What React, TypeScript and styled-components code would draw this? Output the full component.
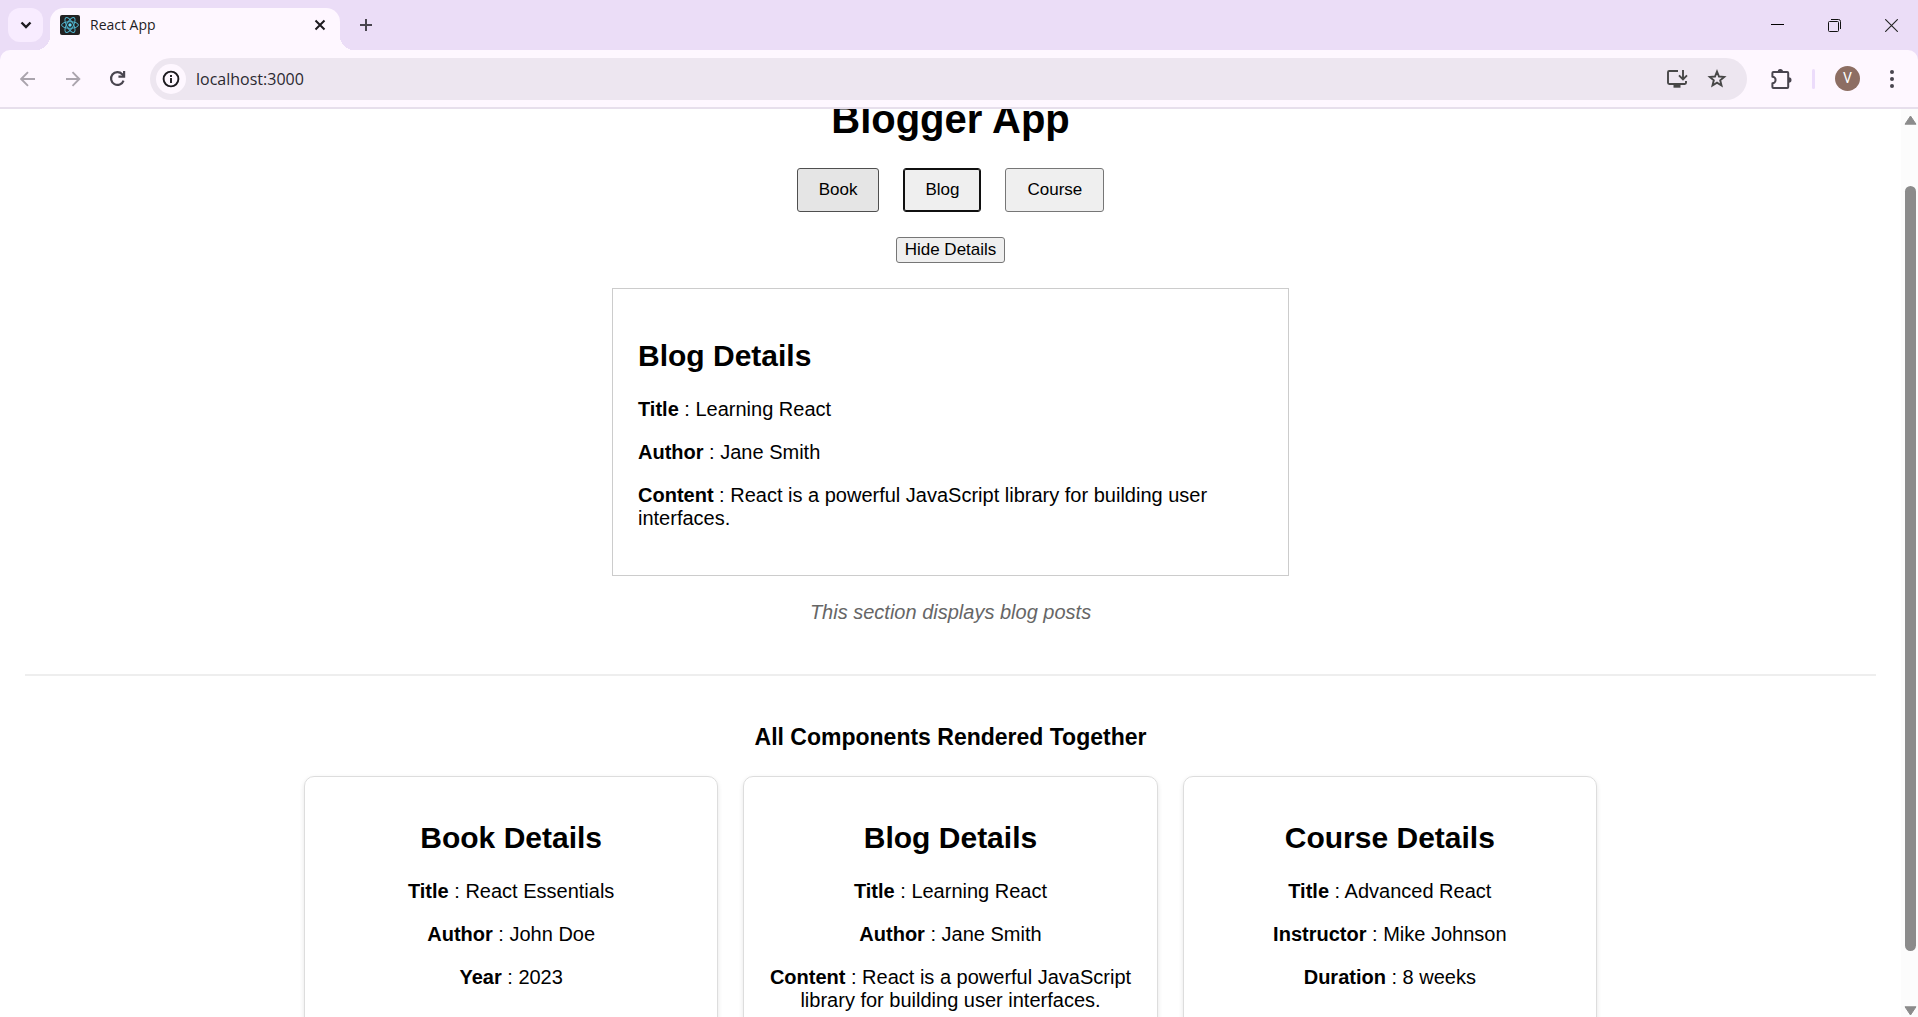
import React, { useLayoutEffect, useRef, useState } from "react";
import styled, { createGlobalStyle } from "styled-components";

const GlobalStyle = createGlobalStyle`
  *, *::before, *::after { box-sizing: border-box; }
  body {
    margin: 0;
    overflow: hidden;
    background: #fff;
    color: #000;
    font-family: "Liberation Sans", Arial, sans-serif;
  }
  button, input { font: inherit; color: inherit; }
`;

const uiFont = `"Open Sans", "Segoe UI", sans-serif`;

/* ---------- Browser frame ---------- */

const Window = styled.div`
  display: flex;
  flex-direction: column;
  height: 100vh;
  overflow: hidden;
`;

const TabStrip = styled.header`
  display: flex;
  align-items: center;
  flex: none;
  height: 50px;
  padding: 0 20px 0 8px;
  background: #ebddf7;
  font-family: ${uiFont};
`;

const IconButton = styled.button<{ $width?: number; $tone?: string }>`
  display: flex;
  align-items: center;
  justify-content: center;
  flex: none;
  width: ${(p) => p.$width ?? 44}px;
  height: 34px;
  padding: 0;
  border: 0;
  background: transparent;
  color: ${(p) => p.$tone ?? "#49454f"};
`;

const TabSearch = styled(IconButton)`
  border-radius: 12px;
  background: #f8ecff;
`;

const Tab = styled.div`
  position: relative;
  display: flex;
  align-items: center;
  align-self: flex-end;
  width: 290px;
  height: 42px;
  margin-left: 7px;
  padding: 0 4px 8px 10px;
  border-radius: 14px 14px 0 0;
  background: #fef7ff;

  &::before,
  &::after {
    content: "";
    position: absolute;
    bottom: 0;
    width: 14px;
    height: 14px;
  }
  &::before {
    right: 100%;
    background: radial-gradient(circle at 0 0, transparent 14px, #fef7ff 14px);
  }
  &::after {
    left: 100%;
    background: radial-gradient(circle at 100% 0, transparent 14px, #fef7ff 14px);
  }
`;

const TabTitle = styled.span`
  flex: 1;
  margin-left: 10px;
  font-size: 14px;
  line-height: 20px;
  color: #1f1d24;
`;

const NewTab = styled(IconButton)`
  margin-left: 8px;
`;

const WindowControls = styled.div`
  display: flex;
  gap: 44px;
  margin-left: auto;
`;

const ToolbarBack = styled.div`
  flex: none;
  background: #ebddf7;
`;

const Toolbar = styled.div`
  display: flex;
  align-items: center;
  height: 59px;
  padding: 0 4px 0 5px;
  border-bottom: 2px solid #e7dfec;
  border-radius: 10px 10px 0 0;
  background: #fef7ff;
`;

const AddressBar = styled.div`
  display: flex;
  align-items: center;
  flex: 1;
  height: 42px;
  margin: 0 12px 0 10px;
  padding: 0 10px 0 6px;
  border-radius: 21px;
  background: #ede6f0;
`;

const SiteInfo = styled(IconButton)`
  height: 30px;
  border-radius: 50%;
  background: #fef7ff;
`;

const AddressInput = styled.input`
  flex: 1;
  min-width: 0;
  margin-left: 10px;
  padding: 0;
  border: 0;
  outline: 0;
  background: transparent;
  font-family: ${uiFont};
  font-size: 16px;
  line-height: 24px;
  color: #2b2930;
`;

const Divider = styled.span`
  flex: none;
  width: 3px;
  height: 20px;
  margin: 0 20px 0 9px;
  border-radius: 2px;
  background: #ecdcfb;
`;

const Avatar = styled.button`
  flex: none;
  width: 25px;
  height: 25px;
  margin-right: 10px;
  padding: 0;
  border: 0;
  border-radius: 50%;
  background: #8d6e63;
  color: #fff;
  font-family: Roboto, sans-serif;
  font-size: 14px;
  line-height: 25px;
  text-align: center;
`;

const Viewport = styled.div`
  display: flex;
  flex: 1;
  min-height: 0;
`;

const Scroller = styled.div`
  flex: 1;
  min-width: 0;
  overflow: hidden;
`;

const Scrollbar = styled.div`
  display: flex;
  flex-direction: column;
  align-items: center;
  flex: none;
  width: 17px;
  padding: 6px 0 1px 2px;
  background: #fcfcfc;
`;

const TrackSpace = styled.div<{ $share: number }>`
  flex: ${(p) => p.$share};
`;

const Thumb = styled(TrackSpace)`
  width: 11px;
  border-radius: 6px;
  background: #8b8b8b;
`;

/* ---------- Page ---------- */

const Page = styled.main`
  padding: 25px;
  text-align: center;
`;

const PageTitle = styled.h1`
  margin: 27px 0 26px;
  font-size: 40px;
  line-height: 46px;
`;

const Choices = styled.div`
  display: flex;
  justify-content: center;
  gap: 24px;
`;

const ChoiceButton = styled.button<{ $state?: "hovered" | "focused" }>`
  height: 44px;
  padding: 0 21px;
  border: 1px solid ${(p) => (p.$state === "hovered" ? "#4f4f4f" : "#767676")};
  border-radius: 3px;
  background: ${(p) => (p.$state === "hovered" ? "#e5e5e5" : "#efefef")};
  font-size: 17px;
  line-height: 20px;
  ${(p) =>
    p.$state === "focused" &&
    `border-color: #101010; box-shadow: inset 0 0 0 1px #101010;`}
`;

const ToggleButton = styled.button`
  display: block;
  height: 26px;
  margin: 25px auto;
  padding: 0 8px;
  border: 1px solid #767676;
  border-radius: 3px;
  background: #efefef;
  font-size: 17px;
  line-height: 20px;
`;

const DetailBox = styled.section`
  width: 677px;
  max-width: 100%;
  margin: 0 auto 25px;
  padding: 25px;
  border: 1px solid #ccc;
  text-align: left;
`;

const DetailTitle = styled.h2`
  margin: 25px 0;
  font-size: 30px;
  line-height: 34px;
`;

const Field = styled.p`
  margin: 20px 0;
  font-size: 20px;
  line-height: 23px;
`;

const Note = styled.p`
  margin: 0;
  font-size: 20px;
  line-height: 23px;
  font-style: italic;
  color: #666;
`;

const Rule = styled.hr`
  height: 2px;
  margin: 50px 0 47px;
  border: 0;
  background: #eee;
`;

const GroupTitle = styled.h3`
  margin: 0 0 25px;
  font-size: 23px;
  line-height: 28px;
`;

const CardGrid = styled.div`
  display: grid;
  grid-template-columns: repeat(3, 1fr);
  gap: 25px;
  width: 100%;
  max-width: 1293px;
  margin: 0 auto 25px;
`;

const Card = styled.article`
  padding: 19px;
  border: 1px solid #ddd;
  border-radius: 10px;
  box-shadow: 0 2px 5px rgba(0, 0, 0, 0.1);
`;

/* ---------- Icons ---------- */

const ReactIcon = () => (
  <svg width="20" height="20" viewBox="0 0 20 20" aria-hidden="true">
    <rect width="20" height="20" rx="2" fill="#222" />
    <g fill="none" stroke="#4fb3cc" strokeWidth="1">
      <ellipse cx="10" cy="10" rx="8.4" ry="3.3" />
      <ellipse cx="10" cy="10" rx="8.4" ry="3.3" transform="rotate(60 10 10)" />
      <ellipse cx="10" cy="10" rx="8.4" ry="3.3" transform="rotate(120 10 10)" />
    </g>
    <circle cx="10" cy="10" r="1.7" fill="#61dafb" />
  </svg>
);

const ChevronIcon = () => (
  <svg width="12" height="12" viewBox="0 0 12 12" fill="none" stroke="currentColor" strokeWidth="2.4" aria-hidden="true">
    <path d="M1.5 3.5 6 8l4.5-4.5" />
  </svg>
);

const CloseTabIcon = () => (
  <svg width="12" height="12" viewBox="0 0 12 12" fill="none" stroke="currentColor" strokeWidth="2" aria-hidden="true">
    <path d="m1.5 1.5 9 9m0-9-9 9" />
  </svg>
);

const PlusIcon = () => (
  <svg width="14" height="14" viewBox="0 0 14 14" fill="none" stroke="currentColor" strokeWidth="2" aria-hidden="true">
    <path d="M7 1v12M1 7h12" />
  </svg>
);

const ArrowIcon = ({ forward = false }: { forward?: boolean }) => (
  <svg width="16" height="16" viewBox="0 0 16 16" fill="none" stroke="currentColor" strokeWidth="1.9" aria-hidden="true">
    <path d={forward ? "M1 8h13M7.5 1.2 14.3 8 7.5 14.8" : "M15 8H2M8 1.2 1.2 8 8 14.8"} />
  </svg>
);

const ReloadIcon = () => (
  <svg width="17" height="17" viewBox="0 0 18 18" fill="none" stroke="currentColor" strokeWidth="2.3" aria-hidden="true">
    <path d="M15.400 11.200A6.800 6.800 0 1 1 14 4.400L16 6.600" />
    <path d="M16 1v6h-6" />
  </svg>
);

const InfoIcon = () => (
  <svg width="18" height="18" viewBox="0 0 18 18" fill="none" stroke="currentColor" strokeWidth="1.9" aria-hidden="true">
    <circle cx="9" cy="9" r="7.4" />
    <path d="M9 8v5M9 5v2" />
  </svg>
);

const InstallIcon = () => (
  <svg width="22" height="20" viewBox="0 0 22 20" fill="none" stroke="currentColor" strokeWidth="1.9" aria-hidden="true">
    <path d="M12 2H3.2Q2 2 2 3.2v10.6Q2 15 3.2 15h15.6q1.2 0 1.2-1.2V12" />
    <path d="M17 1v8.500M13 6.300l4 4 4-4" />
    <path d="M7.5 17h7" strokeWidth="3.4" />
  </svg>
);

const StarIcon = () => (
  <svg width="20" height="20" viewBox="0 0 20 20" fill="none" stroke="currentColor" strokeWidth="1.9" aria-hidden="true">
    <path d="m10 2.600 2 4.900 5.200.4-4 3.400 1.300 5.200-4.500-2.800-4.500 2.800 1.300-5.200-4-3.400 5.200-.4z" />
  </svg>
);

const PuzzleIcon = () => (
  <svg width="22" height="22" viewBox="0 0 22 22" aria-hidden="true">
    <path
      d="M3.400 4h13.800q1 0 1 1v14q0 1-1 1H3.400q-1 0-1-1v-3.800a3.100 3.100 0 0 0 0-6.400V5q0-1 1-1z"
      fill="none"
      stroke="currentColor"
      strokeWidth="2"
      strokeLinejoin="round"
    />
    <path d="M7.600 3.600a2.700 2.700 0 0 1 5.400 0zM18.800 9.300a2.700 2.700 0 0 1 0 5.400z" fill="currentColor" />
  </svg>
);

const DotsIcon = () => (
  <svg width="6" height="20" viewBox="0 0 6 20" fill="currentColor" aria-hidden="true">
    <circle cx="3" cy="3" r="2" />
    <circle cx="3" cy="10" r="2" />
    <circle cx="3" cy="17" r="2" />
  </svg>
);

const MinimizeIcon = () => (
  <svg width="13" height="13" viewBox="0 0 13 13" stroke="#000" aria-hidden="true">
    <path d="M0 5.500h13" />
  </svg>
);

const RestoreIcon = () => (
  <svg width="13" height="13" viewBox="0 0 13 13" fill="none" stroke="#111" strokeWidth="1" aria-hidden="true">
    <rect x="0.500" y="2.500" width="10" height="10" rx="1" />
    <path d="M3 .5h7.500a2 2 0 0 1 2 2V10" />
  </svg>
);

const CloseWindowIcon = () => (
  <svg width="13" height="13" viewBox="0 0 13 13" stroke="#222" strokeWidth="1.100" aria-hidden="true">
    <path d="m.2.2 12.600 12.600m0-12.600L.2 12.800" />
  </svg>
);

const ScrollArrow = ({ down = false }: { down?: boolean }) => (
  <svg width="13" height="10" viewBox="0 0 13 10" fill="#8b8b8b" stroke="#8b8b8b" strokeLinejoin="round" aria-hidden="true">
    <path d={down ? "M1 .8h11L6.500 9z" : "M1 9.200h11L6.500 1z"} />
  </svg>
);

/* ---------- Content ---------- */

type Details = { heading: string; fields: [string, string][] };

const book: Details = {
  heading: "Book Details",
  fields: [["Title", "React Essentials"], ["Author", "John Doe"], ["Year", "2023"]],
};
const blog: Details = {
  heading: "Blog Details",
  fields: [
    ["Title", "Learning React"],
    ["Author", "Jane Smith"],
    ["Content", "React is a powerful JavaScript library for building user interfaces."],
  ],
};
const course: Details = {
  heading: "Course Details",
  fields: [["Title", "Advanced React"], ["Instructor", "Mike Johnson"], ["Duration", "8 weeks"]],
};

const DetailContent = ({ heading, fields }: Details) => (
  <>
    <DetailTitle>{heading}</DetailTitle>
    {fields.map(([label, value]) => (
      <Field key={label}>
        <strong>{label}</strong> : {value}
      </Field>
    ))}
  </>
);

export default function App() {
  const [address, setAddress] = useState("localhost:3000");
  const scroller = useRef<HTMLDivElement>(null);

  useLayoutEffect(() => {
    if (scroller.current) scroller.current.scrollTop = 65;
  }, []);

  return (
    <Window>
      <GlobalStyle />
      <TabStrip>
        <TabSearch $width={35} $tone="#1d1b20" aria-label="Search tabs"><ChevronIcon /></TabSearch>
        <Tab>
          <ReactIcon />
          <TabTitle>React App</TabTitle>
          <IconButton $width={32} $tone="#1d1b20" aria-label="Close tab"><CloseTabIcon /></IconButton>
        </Tab>
        <NewTab $width={36} aria-label="New tab"><PlusIcon /></NewTab>
        <WindowControls>
          <IconButton $width={13} aria-label="Minimize"><MinimizeIcon /></IconButton>
          <IconButton $width={13} aria-label="Restore"><RestoreIcon /></IconButton>
          <IconButton $width={13} aria-label="Close"><CloseWindowIcon /></IconButton>
        </WindowControls>
      </TabStrip>
      <ToolbarBack>
        <Toolbar>
          <IconButton $width={45} $tone="#aaa4ad" aria-label="Back"><ArrowIcon /></IconButton>
          <IconButton $width={45} $tone="#aaa4ad" aria-label="Forward"><ArrowIcon forward /></IconButton>
          <IconButton $width={45} aria-label="Reload"><ReloadIcon /></IconButton>
          <AddressBar>
            <SiteInfo $width={30} $tone="#1d1b20" aria-label="Site information"><InfoIcon /></SiteInfo>
            <AddressInput aria-label="Address" value={address} onChange={(e) => setAddress(e.target.value)} />
            <IconButton $width={40} $tone="#474747" aria-label="Install app"><InstallIcon /></IconButton>
            <IconButton $width={40} $tone="#474747" aria-label="Bookmark"><StarIcon /></IconButton>
          </AddressBar>
          <IconButton aria-label="Extensions"><PuzzleIcon /></IconButton>
          <Divider />
          <Avatar aria-label="Profile">V</Avatar>
          <IconButton aria-label="Menu"><DotsIcon /></IconButton>
        </Toolbar>
      </ToolbarBack>
      <Viewport>
        <Scroller ref={scroller}>
          <Page>
            <PageTitle>Blogger App</PageTitle>
            <Choices>
              <ChoiceButton $state="hovered">Book</ChoiceButton>
              <ChoiceButton $state="focused">Blog</ChoiceButton>
              <ChoiceButton>Course</ChoiceButton>
            </Choices>
            <ToggleButton>Hide Details</ToggleButton>
            <DetailBox><DetailContent {...blog} /></DetailBox>
            <Note>This section displays blog posts</Note>
            <Rule />
            <GroupTitle>All Components Rendered Together</GroupTitle>
            <CardGrid>
              {[book, blog, course].map((item) => (
                <Card key={item.heading}><DetailContent {...item} /></Card>
              ))}
            </CardGrid>
          </Page>
        </Scroller>
        <Scrollbar aria-hidden="true">
          <ScrollArrow />
          <TrackSpace $share={61} />
          <Thumb $share={765} />
          <TrackSpace $share={55} />
          <ScrollArrow down />
        </Scrollbar>
      </Viewport>
    </Window>
  );
}
